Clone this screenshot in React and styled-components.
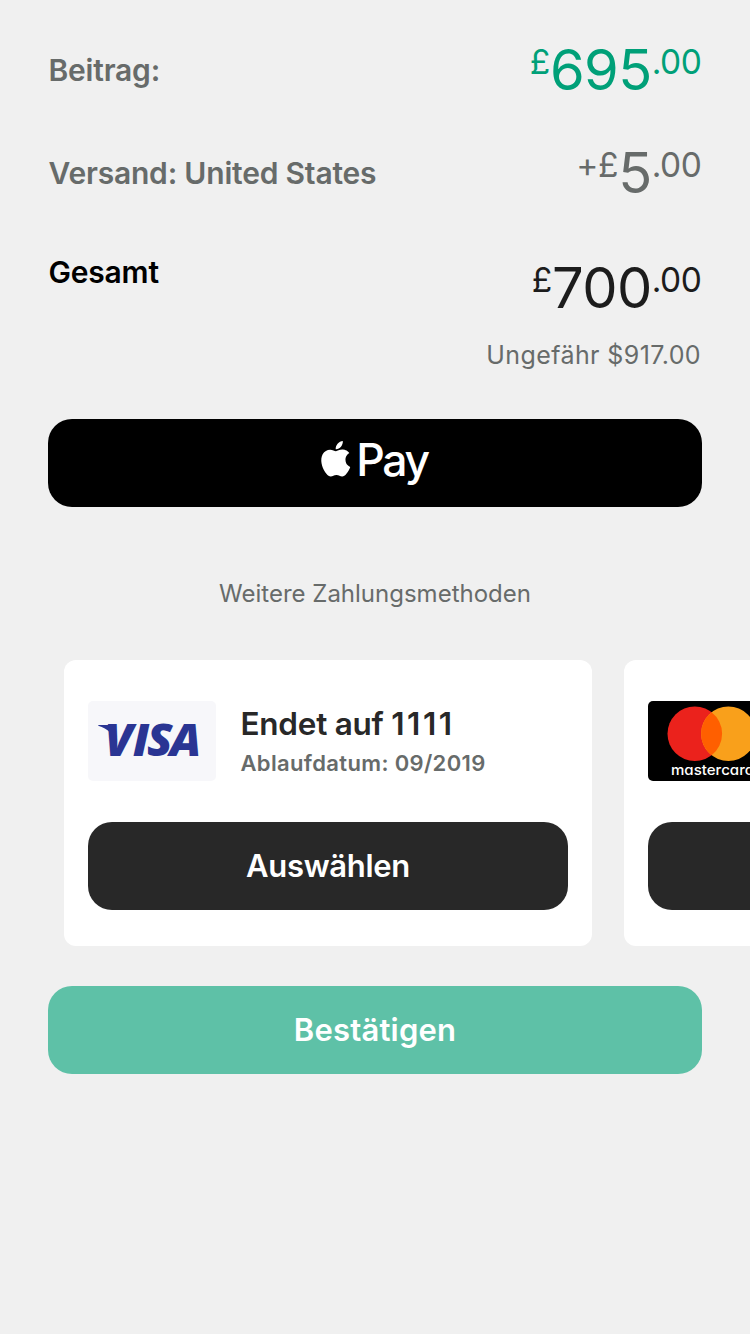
import React from "react";
import styled, { createGlobalStyle } from "styled-components";
import { SiApple } from "react-icons/si";

const GlobalStyle = createGlobalStyle`
  * { box-sizing: border-box; }
  body {
    margin: 0;
    background: #f0f0f0;
    font-family: Inter, "Liberation Sans", sans-serif;
    overflow: hidden;
  }
  button { font-family: inherit; border: 0; margin: 0; padding: 0; }
`;

const Page = styled.main`
  display: flex;
  flex-direction: column;
  width: 750px;
  height: 1334px;
  padding: 40px 48px 0;
  overflow: hidden;
  color: #676b6a;
`;

const Row = styled.div`
  display: flex;
  justify-content: space-between;
  align-items: flex-start;
  height: ${(p) => p.$height}px;
`;

const Label = styled.span`
  padding: ${(p) => p.$top}px 0 0 0.5px;
  font-size: 30px;
  line-height: 37px;
  font-weight: 600;
  letter-spacing: -0.2px;
  color: ${(p) => p.$color || "inherit"};
  white-space: nowrap;
`;

const Amount = styled.div`
  display: flex;
  align-items: flex-start;
  padding: ${(p) => p.$top || 0}px 0.5px 0 0;
  color: ${(p) => p.$color || "inherit"};
`;

const Whole = styled.span`
  padding-top: 1px;
  font-size: 56px;
  line-height: 58px;
  letter-spacing: -0.6px;
`;

const Minor = styled.span`
  padding-top: 1px;
  font-size: 33.5px;
  line-height: 43px;
  font-weight: 400;
  letter-spacing: -0.4px;
`;

const Approx = styled.div`
  height: 79px;
  padding-right: 1px;
  font-size: 25px;
  line-height: 30px;
  letter-spacing: 0.4px;
  text-align: right;
`;

const WideButton = styled.button`
  display: flex;
  flex: none;
  align-items: center;
  justify-content: center;
  width: 100%;
  height: 88px;
  border-radius: 24px;
  background: ${(p) => p.$bg};
  color: #fff;
  font-size: 31px;
  line-height: 38px;
  font-weight: 600;
  letter-spacing: ${(p) => p.$spacing || 0}px;
`;

const AppleMark = styled(SiApple)`
  width: 35.5px;
  height: 35.5px;
  margin: -8px 2.5px 0 -4px;
`;

const PayWord = styled.span`
  margin-top: -6px;
  font-size: 44.5px;
  line-height: 54px;
  font-weight: 500;
  letter-spacing: -2.4px;
`;

const SectionTitle = styled.h2`
  margin: 72px 0 51px;
  font-size: 24px;
  line-height: 30px;
  font-weight: 400;
  letter-spacing: 0;
  text-align: center;
`;

const Carousel = styled.section`
  display: flex;
  gap: 32px;
  margin: 0 -48px 40px 16px;
  overflow: hidden;
`;

const Card = styled.article`
  flex: none;
  width: 528px;
  height: 286px;
  padding: 41px 24px 36px;
  border-radius: 12px;
  background: #fff;
`;

const CardHead = styled.div`
  display: flex;
  gap: 24px;
  height: 121px;
`;

const Logo = styled.svg`
  flex: none;
  width: 128px;
  height: 80px;
  border-radius: 5px;
  background: ${(p) => p.$bg};
`;

const CardTitle = styled.div`
  padding: 4px 0 0 0.5px;
  font-size: 31.5px;
  line-height: 38px;
  font-weight: 600;
  letter-spacing: -0.25px;
  color: #282828;
`;

const LastDigits = styled.span`
  letter-spacing: 2.5px;
`;

const CardExpiry = styled.div`
  padding: 6px 0 0 0.5px;
  font-size: 22px;
  line-height: 28px;
  font-weight: 600;
  letter-spacing: 0.35px;
`;

function Price({ symbol, whole, color, top }) {
  return (
    <Amount $color={color} $top={top}>
      <Minor>{symbol}</Minor>
      <Whole>{whole}</Whole>
      <Minor>.00</Minor>
    </Amount>
  );
}

function VisaLogo() {
  return (
    <Logo viewBox="0 0 128 80" $bg="#f7f7fa">
      <g fill="#2a3593">
        <path d="M10.300 24H22c2.400 0 3.700 1 4.200 3.300l2.500 15C25.500 33.500 20 27.500 10.300 24.700z" />
        <text
          transform="scale(1.06 1)"
          x="15.600 42.300 55.600 77.200"
          y="55.500"
          fontFamily="Open Sans, sans-serif"
          fontSize="44"
          fontWeight="800"
          fontStyle="italic"
        >
          VISA
        </text>
      </g>
    </Logo>
  );
}

function MastercardLogo() {
  return (
    <Logo viewBox="0 0 128 80" $bg="#000">
      <circle cx="46.800" cy="32.800" r="27.300" fill="#eb221c" />
      <circle cx="80.400" cy="32.800" r="27.300" fill="#f9a01b" />
      <path d="M63.600 11.280a27.300 27.300 0 0 1 0 43.040a27.300 27.300 0 0 1 0-43.040z" fill="#ff5f00" />
      <text
        x="23"
        y="74.300"
        fill="#fff"
        fontSize="14.500"
        fontWeight="500"
        textLength="83"
        lengthAdjust="spacingAndGlyphs"
        style={{ fontFeatureSettings: '"cv11"' }}
      >
        mastercard
      </text>
    </Logo>
  );
}

export default function App() {
  return (
    <>
      <GlobalStyle />
      <Page>
        <Row $height={103}>
          <Label $top={12}>Beitrag:</Label>
          <Price symbol="£" whole="695" color="#00a078" />
        </Row>
        <Row $height={103}>
          <Label $top={12}>Versand: United States</Label>
          <Price symbol="+£" whole="5" />
        </Row>
        <Row $height={94}>
          <Label $top={8} $color="#000">Gesamt</Label>
          <Price symbol="£" whole="700" color="#1c1c1c" top={12} />
        </Row>
        <Approx>Ungefähr $917.00</Approx>
        <WideButton $bg="#000" aria-label="Apple Pay">
          <AppleMark />
          <PayWord>Pay</PayWord>
        </WideButton>
        <SectionTitle>Weitere Zahlungsmethoden</SectionTitle>
        <Carousel>
          <Card>
            <CardHead>
              <VisaLogo />
              <div>
                <CardTitle>
                  Endet auf <LastDigits>1111</LastDigits>
                </CardTitle>
                <CardExpiry>Ablaufdatum: 09/2019</CardExpiry>
              </div>
            </CardHead>
            <WideButton $bg="#282828" $spacing={-0.3}>Auswählen</WideButton>
          </Card>
          <Card>
            <CardHead>
              <MastercardLogo />
            </CardHead>
            <WideButton $bg="#282828" aria-label="Mastercard" />
          </Card>
        </Carousel>
        <WideButton $bg="#5ec1a7" $spacing={0.2}>Bestätigen</WideButton>
      </Page>
    </>
  );
}
